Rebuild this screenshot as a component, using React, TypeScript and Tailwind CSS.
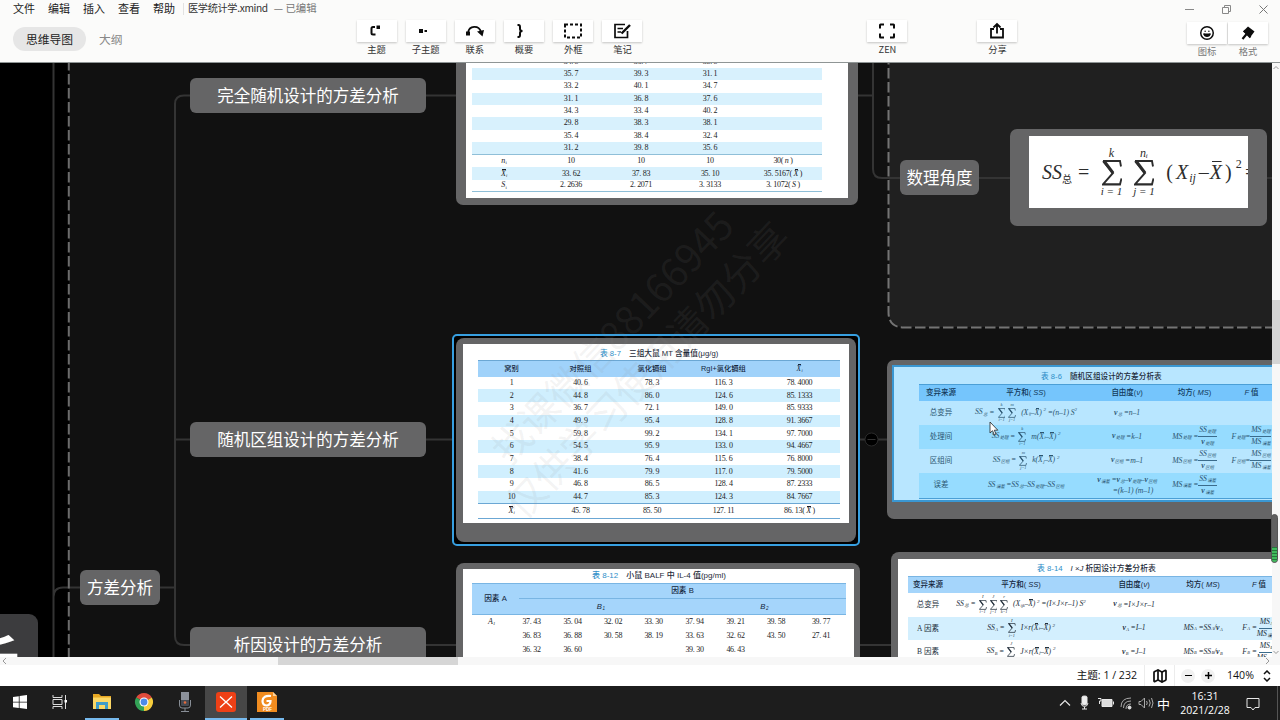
import type { ReactNode } from "react";
import { Smile, Map as MapIcon } from "lucide-react";

const serif = "font-['Liberation_Serif','Noto_Sans_CJK_SC',serif]";

function Box({ className, children }: { className: string; children?: ReactNode }) {
  return <div className={`absolute ${className}`}>{children}</div>;
}

/* ---------- maths ---------- */
function Sub({ children }: { children: ReactNode }) {
  return <span className="relative top-[0.26em] ml-[0.5px] text-[0.58em] tracking-[-0.2px]">{children}</span>;
}
function Bar({ children }: { children: ReactNode }) {
  return <span className="bg-[linear-gradient(currentColor,currentColor)] bg-[length:80%_1px] bg-[position:100%_0%] bg-no-repeat">{children}</span>;
}
function Sum({ top, bottom }: { top: string; bottom: string }) {
  return (
    <span className="mx-[1.5px] inline-flex flex-col items-center leading-none not-italic tracking-normal">
      <span className="text-[0.6em] italic leading-none">{top}</span>
      <svg viewBox="0 0 20 24" className="my-[0.02em] h-[1.3em] w-[1em]" preserveAspectRatio="none">
        <path d="M1 1H18L19 6M1 1L11 12L1 22.5H18L19.5 17" fill="none" stroke="currentColor" strokeWidth="1.9" />
        <path d="M2 1L11 12" stroke="currentColor" strokeWidth="3" />
      </svg>
      <span className="text-[0.55em] italic leading-none">{bottom}</span>
    </span>
  );
}
function Frac({ top, bottom }: { top: ReactNode; bottom: ReactNode }) {
  return (
    <span className="inline-flex flex-col items-center leading-[10px]">
      <span className="border-b border-[#3b6c8c] px-px">{top}</span>
      <span>{bottom}</span>
    </span>
  );
}
function M({ children }: { children: ReactNode }) {
  return (
    <span className={`flex items-center justify-center whitespace-nowrap text-[7.7px] italic leading-[10px] tracking-[-0.1px] ${serif}`}>
      {children}
    </span>
  );
}
function SS({ s }: { s: string }) {
  return <span>SS<Sub>{s}</Sub></span>;
}
function Nu({ s }: { s: string }) {
  return <span><b>ν</b><Sub>{s}</Sub></span>;
}
const Sq = () => <sup className="relative -top-[3px] text-[5px] leading-none">2</sup>;

/* ---------- tables ---------- */
function Caption({ no, children, className = "" }: { no: string; children: ReactNode; className?: string }) {
  return (
    <div className={`flex items-center gap-2 whitespace-nowrap font-['Liberation_Sans','Noto_Sans_CJK_SC',sans-serif] font-medium leading-none text-[#1d2a38] ${className}`}>
      <span className="text-[#2f8fc9]">表 {no}</span>
      <span>{children}</span>
    </div>
  );
}

const num = "text-[8px] tracking-[-0.3px] text-[#1c1c24] whitespace-nowrap";
const XiBar = () => <i><Bar>X</Bar><Sub>i</Sub></i>;

const randomRows = [
  ["34. 5", "36. 7", "38. 5"], ["35. 7", "39. 3", "31. 1"], ["33. 2", "40. 1", "34. 7"], ["31. 1", "36. 8", "37. 6"],
  ["34. 3", "33. 4", "40. 2"], ["29. 8", "38. 3", "38. 1"], ["35. 4", "38. 4", "32. 4"], ["31. 2", "39. 8", "35. 6"],
];

function RandomTable() {
  const cols = "grid grid-cols-[64px_70px_70px_68px_78px] h-[12.3px] items-center text-center";
  return (
    <div className={`w-[350px] ${serif} ${num} leading-none`}>
      <div className="border-b border-[#8fbfd8]">
        {randomRows.map((r, i) => (
          <div key={i} className={`${cols} ${i % 2 ? "bg-[#d8f1fd]" : ""}`}>
            <span />{r.map((v) => <span key={v}>{v}</span>)}
          </div>
        ))}
      </div>
      <div className={cols}><span><i>n</i><Sub>i</Sub></span><span>10</span><span>10</span><span>10</span><span>30( <i>n</i> )</span></div>
      <div className={`${cols} bg-[#d8f1fd]`}><XiBar /><span>33. 62</span><span>37. 83</span><span>35. 10</span><span>35. 5167( <i><Bar>X</Bar></i> )</span></div>
      <div className={`${cols} border-b border-[#8fbfd8]`}><span><i>S</i><Sub>i</Sub></span><span>2. 2636</span><span>2. 2071</span><span>3. 3133</span><span>3. 1072( <i>S</i> )</span></div>
    </div>
  );
}

const ratRows = [
  ["1", "40. 6", "78. 3", "116. 3", "78. 4000"], ["2", "44. 8", "86. 0", "124. 6", "85. 1333"],
  ["3", "36. 7", "72. 1", "149. 0", "85. 9333"], ["4", "49. 9", "95. 4", "128. 8", "91. 3667"],
  ["5", "59. 8", "99. 2", "134. 1", "97. 7000"], ["6", "54. 5", "95. 9", "133. 0", "94. 4667"],
  ["7", "38. 4", "76. 4", "115. 6", "76. 8000"], ["8", "41. 6", "79. 9", "117. 0", "79. 5000"],
  ["9", "46. 8", "86. 5", "128. 4", "87. 2333"], ["10", "44. 7", "85. 3", "124. 3", "84. 7667"],
];

function RatTable() {
  const cols = "grid grid-cols-[67px_71px_72px_71px_81px] items-center text-center";
  return (
    <div className="flex h-full flex-col">
      <Caption no="8-7" className="h-4 pl-[137px] pt-[3px] text-[7.7px]">三组大鼠 MT 含量值(μg/g)</Caption>
      <div className={`ml-[15px] w-[362px] ${serif} ${num} leading-none`}>
        <div className={`${cols} h-[16.5px] border-t border-[#6ba7d4] bg-[#a0d2fa] font-['Liberation_Sans','Noto_Sans_CJK_SC',sans-serif] text-[7.3px] font-medium tracking-normal text-[#14273c]`}>
          <span>窝别</span><span>对照组</span><span>氯化镉组</span><span>RgI+氯化镉组</span><span className={serif}><XiBar /></span>
        </div>
        {ratRows.map((r, i) => (
          <div key={r[0]} className={`${cols} h-[12.68px] ${i % 2 ? "bg-[#d0effe]" : ""}`}>
            {r.map((v, j) => <span key={j}>{v}</span>)}
          </div>
        ))}
        <div className={`${cols} h-[15.5px] border-y border-[#6ba7d4]`}>
          <XiBar /><span>45. 78</span><span>85. 50</span><span>127. 11</span><span>86. 13( <i><Bar>X</Bar></i> )</span>
        </div>
      </div>
    </div>
  );
}

function BlockTable() {
  const cols = "grid grid-cols-[44px_126px_76px_59px_55px] items-center text-center";
  return (
    <div className="flex h-full flex-col text-[#2b5570]">
      <Caption no="8-6" className="h-[17px] pl-[147px] pt-[3px] text-[7.6px] tracking-[0.05px]">随机区组设计的方差分析表</Caption>
      <div className={`ml-[25px] w-[360px] border-b border-[#4b9fd6] text-[7.5px] ${serif}`}>
        <div className={`${cols} h-[17px] border-t border-[#4b9fd6] bg-[#75c5fc] font-['Liberation_Sans','Noto_Sans_CJK_SC',sans-serif] font-medium text-[#12395a]`}>
          <span>变异来源</span><span>平方和( <i>SS</i>)</span><span>自由度(<i>ν</i>)</span><span>均方( <i>MS</i>)</span><span><i>F</i> 值</span>
        </div>
        <div className={`${cols} h-6`}>
          <span>总变异</span>
          <M><SS s="总" />&nbsp;=&nbsp; <Sum top="k" bottom="i=1" /><Sum top="m" bottom="j=1" />&nbsp; (X<Sub>ij</Sub>–<Bar>X</Bar>)&nbsp;<Sq />&nbsp;=(n–1) S<Sq /></M>
          <M><Nu s="总" />&nbsp;=n–1</M>
        </div>
        <div className={`${cols} h-[23.5px] bg-[#96dcff]`}>
          <span>处理间</span>
          <M><SS s="处理" />&nbsp;=&nbsp; <Sum top="k" bottom="i=1" />&nbsp; m(<Bar>X</Bar><Sub>i</Sub>–<Bar>X</Bar>)&nbsp;<Sq /></M>
          <M><Nu s="处理" />&nbsp;=k–1</M>
          <M>MS<Sub>处理</Sub>&nbsp;=<Frac top={<SS s="处理" />} bottom={<Nu s="处理" />} /></M>
          <M>F<Sub>处理</Sub>=<Frac top={<>MS<Sub>处理</Sub></>} bottom={<>MS<Sub>误差</Sub></>} /></M>
        </div>
        <div className={`${cols} h-6`}>
          <span>区组间</span>
          <M><SS s="区组" />&nbsp;=&nbsp; <Sum top="m" bottom="j=1" />&nbsp; k(<Bar>X</Bar><Sub>j</Sub>–<Bar>X</Bar>)&nbsp;<Sq /></M>
          <M><Nu s="区组" />&nbsp;=m–1</M>
          <M>MS<Sub>区组</Sub>&nbsp;=<Frac top={<SS s="区组" />} bottom={<Nu s="区组" />} /></M>
          <M>F<Sub>区组</Sub>=<Frac top={<>MS<Sub>区组</Sub></>} bottom={<>MS<Sub>误差</Sub></>} /></M>
        </div>
        <div className={`${cols} h-[25px] bg-[#96dcff]`}>
          <span>误差</span>
          <M><SS s="误差" />&nbsp;=<SS s="总" />–<SS s="处理" />–<SS s="区组" /></M>
          <div className="flex flex-col">
            <M><Nu s="误差" />&nbsp;=<Nu s="总" />–<Nu s="处理" />–<Nu s="区组" /></M>
            <div className="pl-3"><M>=(k–1) (m–1)</M></div>
          </div>
          <M>MS<Sub>误差</Sub>&nbsp;=<Frac top={<SS s="误差" />} bottom={<Nu s="误差" />} /></M>
        </div>
      </div>
    </div>
  );
}

const balfRows = [
  ["37. 43", "35. 04", "32. 02", "33. 30", "37. 94", "39. 21", "39. 58", "39. 77"],
  ["36. 83", "36. 88", "30. 58", "38. 19", "33. 63", "32. 62", "43. 50", "27. 41"],
  ["36. 32", "36. 60", "", "", "39. 30", "46. 43", "", ""],
];

function BalfTable() {
  return (
    <div className="flex flex-col">
      <Caption no="8-12" className="h-[14px] pl-[129px] text-[8px]">小鼠 BALF 中 IL-4 值(pg/ml)</Caption>
      <div className="ml-[9px] w-[374px]">
        <div className="flex h-[32px] border-y border-[#79b5e3] bg-[#a5d5fb] font-['Liberation_Sans','Noto_Sans_CJK_SC',sans-serif] text-[7.7px] font-medium leading-none text-[#14273c]">
          <div className="flex w-[47px] items-center justify-center">因素 A</div>
          <div className="flex flex-1 flex-col">
            <div className="flex h-[15px] items-center justify-center border-b border-[#79b5e3]">因素 B</div>
            <div className="flex flex-1 items-center italic">
              <span className="w-1/2 text-center">B<Sub>1</Sub></span>
              <span className="w-1/2 text-center">B<Sub>2</Sub></span>
            </div>
          </div>
        </div>
        {balfRows.map((r, i) => (
          <div key={i} className={`grid h-[14.2px] grid-cols-[39px_41px_41px_40px_41px_41px_41px_40px_50px] items-center text-center leading-none ${serif} ${num}`}>
            <span>{i === 0 && <i>A<Sub>1</Sub></i>}</span>
            {r.map((v, j) => <span key={j}>{v}</span>)}
          </div>
        ))}
      </div>
    </div>
  );
}

function FactorialTable() {
  const cols = "grid grid-cols-[40px_146px_80px_58px_54px] items-center text-center";
  return (
    <div className="flex flex-col text-[#24303c]">
      <Caption no="8-14" className="h-[17px] pl-[139px] pt-[3px] text-[7.8px]"><i>I</i> ×<i>J</i> 析因设计方差分析表</Caption>
      <div className={`ml-[10px] w-[378px] text-[7.5px] ${serif}`}>
        <div className={`${cols} h-[16.5px] border-t border-[#79b5e3] bg-[#a5d5fb] font-['Liberation_Sans','Noto_Sans_CJK_SC',sans-serif] font-medium text-[#14273c]`}>
          <span>变异来源</span><span>平方和( <i>SS</i>)</span><span>自由度(<i>ν</i>)</span><span>均方( <i>MS</i>)</span><span><i>F</i> 值</span>
        </div>
        <div className={`${cols} h-6`}>
          <span>总变异</span>
          <M><SS s="总" />&nbsp;=&nbsp; <Sum top="I" bottom="i=1" /><Sum top="J" bottom="j=1" /><Sum top="r" bottom="k=1" />&nbsp; (X<Sub>ijk</Sub>–<Bar>X</Bar>)&nbsp;<Sq />&nbsp;=(I×J×r–1) S<Sq /></M>
          <M><Nu s="总" />&nbsp;=I×J×r–1</M>
        </div>
        <div className={`${cols} h-[23.5px] bg-[#d3effe]`}>
          <span>A 因素</span>
          <M><SS s="A" />&nbsp;=&nbsp; <Sum top="I" bottom="i=1" />&nbsp; I×r(<Bar>X</Bar><Sub>i</Sub>–<Bar>X</Bar>)&nbsp;<Sq /></M>
          <M><Nu s="A" />&nbsp;=I–1</M>
          <M>MS<Sub>A</Sub>&nbsp;=SS<Sub>A</Sub>/<Nu s="A" /></M>
          <M>F<Sub>A</Sub>&nbsp;=<Frac top={<>MS<Sub>A</Sub></>} bottom={<>MS<Sub>误差</Sub></>} /></M>
        </div>
        <div className={`${cols} h-6`}>
          <span>B 因素</span>
          <M><SS s="B" />&nbsp;=&nbsp; <Sum top="J" bottom="j=1" />&nbsp; J×r(<Bar>X</Bar><Sub>j</Sub>–<Bar>X</Bar>)&nbsp;<Sq /></M>
          <M><Nu s="B" />&nbsp;=J–1</M>
          <M>MS<Sub>B</Sub>&nbsp;=SS<Sub>B</Sub>/<Nu s="B" /></M>
          <M>F<Sub>B</Sub>&nbsp;=<Frac top={<>MS<Sub>B</Sub></>} bottom={<>MS<Sub>误差</Sub></>} /></M>
        </div>
      </div>
    </div>
  );
}

/* ---------- canvas ---------- */
function Topic({ className, children }: { className: string; children: ReactNode }) {
  return (
    <div className={`absolute flex h-[35px] items-center justify-center whitespace-nowrap rounded-[6px] bg-[#656566] text-[16.5px] text-white ${className}`}>
      {children}
    </div>
  );
}

function Canvas() {
  return (
    <div className="relative h-full w-[1272px] overflow-hidden bg-black">
      <Box className="left-0 -top-[63px] h-[720px] w-[1272px]">
        <Box className="left-[69px] top-0 h-[720px] w-[1203px] bg-[#111111]" />
        <Box className="left-[889px] top-0 h-[327px] w-[383px] rounded-bl-[14px] bg-[#202020]" />
        <svg className="absolute inset-0" width="1272" height="720" fill="none">
          <g stroke="#343434" strokeWidth="2">
            <path d="M53.5 60V660M53.5 597Q53.5 587.5 63 587.5H81M160 587.5H175" />
            <path d="M190 95.5H184Q175 95.5 175 104V636Q175 645 184 645H190M175 439.5H190" />
            <path d="M426 95.5H456M426 439.5H453M426 645H456M858 95.5H873M873 60V169Q873 178 882 178H900M979 178H1010M1267 178H1272M860 439.5H888M860 645H892" />
          </g>
          <path d="M68.8 60V660" stroke="#6c6c6c" strokeWidth="2" strokeDasharray="10.5 3.5" />
          <path d="M888.5 54V312Q888.5 327.5 904 327.5H1272" stroke="#747474" strokeWidth="2" strokeDasharray="10.5 3.5" />
          <circle cx="871.5" cy="439.5" r="6.5" fill="#000" stroke="#2b2b2b" />
          <path d="M867.5 439.5H875.5" stroke="#333" />
        </svg>

        <Box className="-left-[40px] top-[614px] flex h-[90px] w-[78px] justify-end overflow-hidden rounded-[9px] bg-[#3c3c3e] pr-[19px] pt-[11px] text-[56px] font-bold leading-[66px] text-white">析</Box>
        <Topic className="left-[190px] top-[78px] w-[236px]">完全随机设计的方差分析</Topic>
        <Topic className="left-[190px] top-[422px] w-[236px]">随机区组设计的方差分析</Topic>
        <Topic className="left-[190px] top-[627px] w-[236px]">析因设计的方差分析</Topic>
        <Topic className="left-[80px] top-[570px] w-[80px]">方差分析</Topic>
        <Topic className="left-[900px] top-[160px] w-[79px]">数理角度</Topic>

        <Box className="left-[456px] top-[40px] h-[165px] w-[402px] rounded-[7px] bg-[#656566] px-[10px] pb-[7px]">
          <div className="flex h-full items-end bg-white pb-[6px] pl-[6px]"><RandomTable /></div>
        </Box>

        <Box className="left-[452px] top-[334px] h-[212px] w-[408px] rounded-[5px] border-2 border-[#379fe0] bg-black p-[2px]">
          <div className="h-full rounded-[8px] bg-[#656566] px-[7px] pb-[19px] pt-[6px]">
            <div className="h-full bg-white"><RatTable /></div>
          </div>
        </Box>

        <Box className="left-[456px] top-[563px] h-[130px] w-[404px] rounded-[8px] bg-[#656566] px-[7px] pt-[6px]">
          <div className="h-full w-[391px] bg-white"><BalfTable /></div>
        </Box>

        <Box className="left-[1010px] top-[129px] h-[97px] w-[257px] rounded-[7px] bg-[#656566] pl-[19px] pt-[7px]">
          <div className={`flex h-[72px] w-[219px] items-center overflow-hidden whitespace-nowrap bg-white pl-[13px] text-[20px] italic leading-none text-[#2c2c2c] ${serif}`}>
            <span>SS</span><span className="relative top-[8px] text-[10px] not-italic">总</span>
            <span className="ml-[6px] not-italic">=</span>
            <span className="ml-[10px] flex gap-[8px]"><Sum top="k" bottom="i = 1" /><Sum top="nᵢ" bottom="j = 1" /></span>
            <span className="ml-[10px] not-italic">(</span>
            <span className="ml-[3px]">X</span><span className="relative top-[6px] ml-px text-[12px]">ij</span>
            <span className="ml-[3px]">–</span><span className="ml-px"><Bar>X</Bar></span><span className="ml-[3px] not-italic">)</span>
            <span className="relative -top-[8px] ml-[4px] text-[12px] not-italic">2</span><span className="ml-[2px]">=</span>
          </div>
        </Box>

        <Box className="left-[887px] top-[360px] h-[159px] w-[420px] rounded-[7px] bg-[#656566] pl-[5px] pt-[5px]">
          <div className="h-[137px] border-2 border-[#3a97d2] bg-[#b8e6ff]"><BlockTable /></div>
        </Box>
        <Box className="left-[891px] top-[552px] h-[140px] w-[420px] rounded-[8px] bg-[#656566] pl-[7px] pt-[7px]">
          <div className="h-full bg-white"><FactorialTable /></div>
        </Box>

        <Box className="left-[378px] top-[304px] flex h-[96px] w-[500px] -rotate-[46.4deg] flex-col items-center text-[39px] leading-[48px] text-[#8c8c8c]/10">
          <span>找课微信88166945</span><span>仅供学习使用请勿分享</span>
        </Box>
        <svg className="absolute left-[989px] top-[421px]" width="10" height="15" viewBox="0 0 10 15">
          <path d="M1 1V12L3.5 9.7L5.3 13.8L7 13L5.3 9.2H8.8Z" fill="#fff" stroke="#222" strokeWidth=".8" />
        </svg>
      </Box>
    </div>
  );
}

/* ---------- toolbar ---------- */
function Tool({ label, className, children }: { label: string; className?: string; children: ReactNode }) {
  return (
    <div className={`flex w-10 flex-col items-center ${className ?? ""}`}>
      <div className="flex h-[22px] w-10 items-center justify-center bg-white shadow-[0_1px_2px_rgba(0,0,0,0.22)]">
        <svg width="20" height="20" viewBox="0 0 20 20" fill="none" stroke="#0c0c0c" strokeWidth="2">{children}</svg>
      </div>
      <span className="mt-px whitespace-nowrap text-[9.3px] leading-[13px] text-[#333]">{label}</span>
    </div>
  );
}

function Toolbar() {
  return (
    <header className="flex h-[63px] flex-col border-b border-[#8f9595] bg-[#fbfbfa]">
      <div className="flex h-[18px] items-center text-[11px] leading-none text-[#222]">
        <nav className="flex gap-[13px] pb-[2px] pl-[13px]">
          {["文件", "编辑", "插入", "查看", "帮助"].map((m) => <span key={m}>{m}</span>)}
        </nav>
        <span className="ml-[8px] h-3 w-px bg-[#e2e2e2]" />
        <span className="ml-[4px] pb-px text-[10.2px] tracking-[-0.35px] text-[#333]">医学统计学.xmind</span>
        <span className="ml-[6px] pb-px text-[10.4px] text-[#777]">— 已编辑</span>
        <div className="ml-auto flex items-center gap-[28px] pr-[12px]">
          <svg width="9" height="9" stroke="#888"><path d="M0 4.5H9" /></svg>
          <svg width="9" height="9" stroke="#888" fill="none"><path d="M.5 2.5H6.5V8.5H.5ZM2.5 2V.5H8.5V6.5H7" /></svg>
          <svg width="9" height="9" stroke="#777"><path d="M.5.5L8.5 8.5M8.5.5L.5 8.5" /></svg>
        </div>
      </div>
      <div className="flex flex-1">
        <div className="flex w-[343px] items-start pl-[13px] pt-[9px] text-[11.8px]">
          <span className="flex h-6 w-[73px] items-center justify-center rounded-full bg-[#e6e6e6] text-[#222]">思维导图</span>
          <span className="flex h-6 items-center pl-[13px] text-[#888]">大纲</span>
        </div>
        <div className="flex gap-[9.2px] pl-[13.5px] pt-[2px]">
          <Tool label="主题"><path d="M8 6H6Q4.5 6 4.5 7.5V12Q4.5 13.5 6 13.5H8.5" /><path d="M9.500 4.500h3.500v3.500h-3.500z" fill="#0c0c0c" stroke="none" /></Tool>
          <Tool label="子主题"><path d="M3 8h4v4H3zM8.500 9h2.500v2H8.500z" fill="#0c0c0c" stroke="none" /></Tool>
          <Tool label="联系"><path d="M3 12C4 4 14 4 16 11" strokeWidth="1.8" /><path d="M1 10.500h4v4H1zM12 10.500L19 9L17.500 15.500Z" fill="#0c0c0c" stroke="none" /></Tool>
          <Tool label="概要"><path d="M3.500 4H4.500Q6 4 6 6V8Q6 10 8.500 10Q6 10 6 12V14Q6 16 4.500 16H3.500" /></Tool>
          <Tool label="外框"><path d="M2 3.500h16v13H2z" strokeDasharray="3 2" /></Tool>
          <Tool label="笔记"><path d="M13 3.500H3V16.500H15.500V10M5.500 7.500H11M5.500 11H9" strokeWidth="1.7" /><path d="M9.500 12.500L18 4" strokeWidth="2.4" /></Tool>
        </div>
        <Tool label="ZEN" className="ml-[225px] pt-[2px]"><path d="M3 7.500V4Q3 3.500 3.500 3.500H7M13 3.500H16.500Q17 3.500 17 4V7.500M17 12.500V16Q17 16.500 16.500 16.500H13M7 16.500H3.500Q3 16.500 3 16V12.500" /></Tool>
        <Tool label="分享" className="ml-[70px] pt-[2px]"><path d="M7 8H4V16.500H16V8H13M10 12.500V3.500M6.500 6.500L10 3L13.500 6.500" strokeWidth="1.8" /></Tool>
        <div className="ml-auto flex gap-px pr-[12px] pt-[4px] [&_span]:text-[#777]">
          <Tool label="图标"><Smile x="2.5" y="2.5" size={15} strokeWidth={2.4} color="#0c0c0c" /><path d="M6 10.500H14Q13 14 10 14Q7 14 6 10.500Z" fill="#0c0c0c" stroke="none" /></Tool>
          <Tool label="格式"><path d="M10 3.500L16.500 8.500L12 14.500L5 8.500Z" fill="#0c0c0c" stroke="none" /><path d="M9 10.500L4.500 16M6 7.500L12.500 14.500" strokeWidth="2.2" /></Tool>
        </div>
      </div>
    </header>
  );
}

function StatusBar() {
  return (
    <div className="flex h-[21px] items-center justify-end bg-white text-[11px] leading-none text-[#111]">
      <span className="whitespace-nowrap font-['Open_Sans','Noto_Sans_CJK_SC',sans-serif] text-[10.6px]">主题: 1 / 232</span>
      <span className="ml-[7px] h-full w-px bg-[#ececec]" />
      <MapIcon size={16} strokeWidth={2.6} className="ml-[7px]" />
      <span className="ml-[6px] h-full w-px bg-[#ececec]" />
      <span className="ml-[6px] flex size-[14px] items-center justify-center rounded-full bg-[#f1f1f1]"><span className="h-[1.5px] w-[7px] bg-black" /></span>
      <span className="ml-[6px] flex size-[14px] items-center justify-center rounded-full bg-[#f1f1f1]">
        <svg width="7" height="7" stroke="#000" strokeWidth="1.5"><path d="M0 3.500H7M3.500 0V7" /></svg>
      </span>
      <span className="ml-[12px] w-[28px] font-['Open_Sans',sans-serif] text-[10.6px]">140%</span>
      <svg width="8" height="12" className="ml-[8px] mr-[9px]" fill="none" stroke="#111" strokeWidth="1.5"><path d="M1 4L4 1L7 4M1 8L4 11L7 8" /></svg>
    </div>
  );
}

function Task({ active, tile, children }: { active?: boolean; tile?: boolean; children?: ReactNode }) {
  return (
    <div className={`flex h-full w-[41.3px] flex-col items-center ${tile ? "bg-[#474747]" : ""}`}>
      <div className="flex flex-1 items-center">
        <svg width="22" height="22" viewBox="0 0 22 22" fill="none">{children}</svg>
      </div>
      <div className={`h-[2px] ${tile ? "w-full" : "w-[34px]"} ${active ? "bg-[#76b9ed]" : ""}`} />
    </div>
  );
}

function Taskbar() {
  return (
    <footer className="flex h-[34px] items-center bg-[#1d1d1d] text-white">
      <div className="-ml-px flex h-full">
        <Task><path d="M4 6L9.800 5.200V10.700H4ZM10.600 5L18 4V10.700H10.600ZM4 11.500H9.800V17L4 16.200ZM10.600 11.500H18V18L10.600 17.100Z" fill="#fff" /></Task>
        <Task><path d="M3 4V6.500H12V4M3 18V15.500H12V18M3 8.500H12V13.500H3ZM15.500 4V18" stroke="#ddd" /><path d="M14.500 9h2.500v2.500h-2.500z" fill="#fff" /></Task>
        <Task active><path d="M2 3H8L10 5H20V18H2Z" fill="#e7a823" /><path d="M2 6.500H20V18H2Z" fill="#fbd765" /><path d="M5 18V11H17V18H14V14H8V18Z" fill="#3f9cc9" /></Task>
        <Task>
          <path d="M11 11L3.200 6.500A9 9 0 0 1 18.800 6.500Z" fill="#df4b3c" /><path d="M11 11L18.800 6.500A9 9 0 0 1 11 20Z" fill="#f6cd3c" /><path d="M11 11L11 20A9 9 0 0 1 3.200 6.500Z" fill="#33a256" />
          <circle cx="11" cy="11" r="4.5" fill="#fff" /><circle cx="11" cy="11" r="3.4" fill="#4c8be8" />
        </Task>
        <Task><path d="M7 1H15V9H7Z" fill="#8b9099" /><path d="M7 9H15V14Q15 15 14 15H8Q7 15 7 14Z" fill="#454a52" /><circle cx="11" cy="11.5" r="1.3" fill="#e66a3a" /><path d="M5.500 9V14Q5.500 17 8 17H14Q16.500 17 16.500 14V9M11 17V20M7 20.500H15" stroke="#888e96" /></Task>
        <Task active tile><rect x="1" y="1" width="20" height="20" rx="3" fill="#ee4016" /><path d="M5 5.500L11 11L17 5.500M5 16.500L11 11L17 16.500" stroke="#fff" strokeWidth="1.3" /></Task>
        <Task active>
          <path d="M1 1H17L21 5V21H1Z" fill="#f08c20" /><path d="M17 1V5H21Z" fill="#fbd29a" />
          <path d="M15 5Q7 4 6.500 10Q6.500 14.500 11 14.500Q14.500 14 14.500 10H10.500" stroke="#fff" strokeWidth="2.2" />
          <text x="7" y="20" fontSize="4.5" fontWeight="700" fill="#fff" fontFamily="Liberation Sans">PDF</text>
        </Task>
      </div>
      <div className="ml-auto flex items-center">
        <svg width="102" height="34" fill="none" stroke="#e8e8e8">
          <path d="M5 19.500L10 14.500L15 19.500" strokeWidth="1.2" />
          <path d="M27 11Q27 10 29.500 10Q32 10 32 11V17Q32 19 29.500 19Q27 19 27 17Z" fill="#eee" /><path d="M26 17Q26.500 20.500 29.500 20.500Q32.500 20.500 33 17M29.500 21V23M27 23H32" />
          <path d="M47 13.500H57V20.500H47ZM58.500 15.500V18.500" fill="#ddd" /><path d="M43 12.500H46V15H44.500V18" />
          <path d="M66 21Q66 12 76 12M68.500 22Q68.500 15 76 15M71 23Q71 18 76 18" stroke="#aaa" /><circle cx="74.5" cy="21.5" r="1.5" fill="#ddd" />
          <path d="M84 15.500H86L89.500 12V22L86 18.500H84ZM91.500 15Q93 17 91.500 19M94 13.500Q96.500 17 94 20.500M96.500 12Q99.500 17 96.500 22" stroke="#aaa" />
        </svg>
        <span className="text-[13px] leading-none">中</span>
        <div className="ml-[4px] flex w-[62px] flex-col items-center font-['Open_Sans',sans-serif] text-[10.5px] leading-[14.5px]">
          <span>16:31</span><span>2021/2/28</span>
        </div>
        <svg width="44" height="34" fill="none" stroke="#e8e8e8">
          <path d="M11 12.500H23V21.500H19L17 24L15 21.500H11Z" />
          <path d="M41.500 0V34" stroke="#555" />
        </svg>
      </div>
    </footer>
  );
}

export default function App() {
  return (
    <div className="relative flex h-[720px] w-[1280px] flex-col overflow-hidden bg-white font-['Noto_Sans_CJK_SC',sans-serif]">
      <Toolbar />
      <div className="flex h-[594px]">
        <Canvas />
        <div className="flex w-2 flex-col items-center bg-[#f7f7f7]">
          <svg width="8" height="9" fill="none" stroke="#999"><path d="M1.500 6L4 3.500L6.500 6" /></svg>
          <div className="mt-[228px] h-[64px] w-2 bg-[#d4d4d4]" />
          <svg width="8" height="9" className="mt-auto" fill="none" stroke="#999"><path d="M1.500 3L4 5.500L6.500 3" /></svg>
        </div>
      </div>
      <div className="flex h-2 items-center bg-[#f7f7f7]">
        <svg width="278" height="8" fill="none" stroke="#999"><path d="M6 1L3 4L6 7" /></svg>
        <div className="h-2 w-[180px] bg-[#d6d6d6]" />
        <svg width="14" height="8" className="ml-auto" fill="none" stroke="#999"><path d="M0 1L3 4L0 7" /></svg>
      </div>
      <StatusBar />
      <Taskbar />
      <div className="absolute left-[1271px] top-[514px] flex h-[49px] w-[7px] flex-col justify-end overflow-hidden rounded-full border border-[#555] bg-[#606060]">
        {[0, 1, 2, 3, 4].map((n) => <span key={n} className="h-[3px] border-t border-[#25763b] bg-[#3fba5c]" />)}
      </div>
    </div>
  );
}
